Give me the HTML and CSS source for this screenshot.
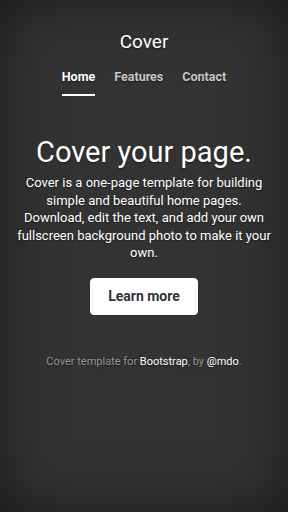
FILE: index.html
```html
<!DOCTYPE html>
<html lang="en">
<head>
<meta charset="utf-8">
<title>Cover</title>
<link rel="stylesheet" href="styles.css">
</head>
<body>
<div class="cover">
  <header class="masthead">
    <h3 class="brand">Cover</h3>
    <nav class="nav">
      <a class="nav-link active" href="#">Home</a>
      <a class="nav-link" href="#">Features</a>
      <a class="nav-link" href="#">Contact</a>
    </nav>
  </header>
  <main class="main">
    <h1 class="heading">Cover your page.</h1>
    <p class="lead">Cover is a one-page template for building simple and beautiful home pages. Download, edit the text, and add your own fullscreen background photo to make it your own.</p>
    <a class="btn" href="#">Learn more</a>
  </main>
  <footer class="footer">
    <p class="footer-text">Cover template for <a href="#">Bootstrap</a>, by <a href="#">@mdo</a>.</p>
  </footer>
</div>
</body>
</html>
```
FILE: styles.css
```css
html, body {
  margin: 0;
  padding: 0;
  height: 100%;
}
body {
  background: #333;
  box-shadow: inset 0 0 60px rgba(0, 0, 0, 0.5);
  color: #fff;
  font-family: Roboto, "Liberation Sans", sans-serif;
  text-shadow: 0 1px 1.5px rgba(0, 0, 0, 0.5);
}
.cover {
  display: flex;
  flex-direction: column;
  align-items: center;
  text-align: center;
  padding: 30px 16px 0;
}
.masthead {
  display: flex;
  flex-direction: column;
  align-items: center;
}
.brand {
  margin: 0;
  font-size: 19px;
  line-height: 24px;
  font-weight: 400;
}
.nav {
  display: flex;
  gap: 19px;
  margin-top: 14px;
}
.nav-link {
  display: block;
  font-size: 12.5px;
  font-weight: 700;
  line-height: 18px;
  padding-bottom: 8px;
  border-bottom: 2px solid transparent;
  color: rgba(255, 255, 255, 0.75);
  text-decoration: none;
}
.nav-link.active {
  color: #fff;
  border-bottom-color: #fff;
}
.main {
  display: flex;
  flex-direction: column;
  align-items: center;
  margin-top: 39px;
}
.heading {
  margin: 0;
  font-size: 29px;
  line-height: 34px;
  font-weight: 400;
}
.lead {
  margin: 5px 0 0;
  font-size: 13px;
  line-height: 17.5px;
}
.btn {
  display: inline-block;
  margin-top: 16px;
  padding: 8px 17px;
  line-height: 19px;
  font-size: 14px;
  font-weight: 700;
  color: #333;
  background: #fff;
  border: 1px solid #fff;
  border-radius: 4px;
  text-decoration: none;
  text-shadow: none;
}
.footer {
  margin-top: 39px;
}
.footer-text {
  margin: 0;
  font-size: 11px;
  line-height: 16px;
  color: rgba(255, 255, 255, 0.5);
}
.footer-text a {
  color: #fff;
  text-decoration: none;
}
```
